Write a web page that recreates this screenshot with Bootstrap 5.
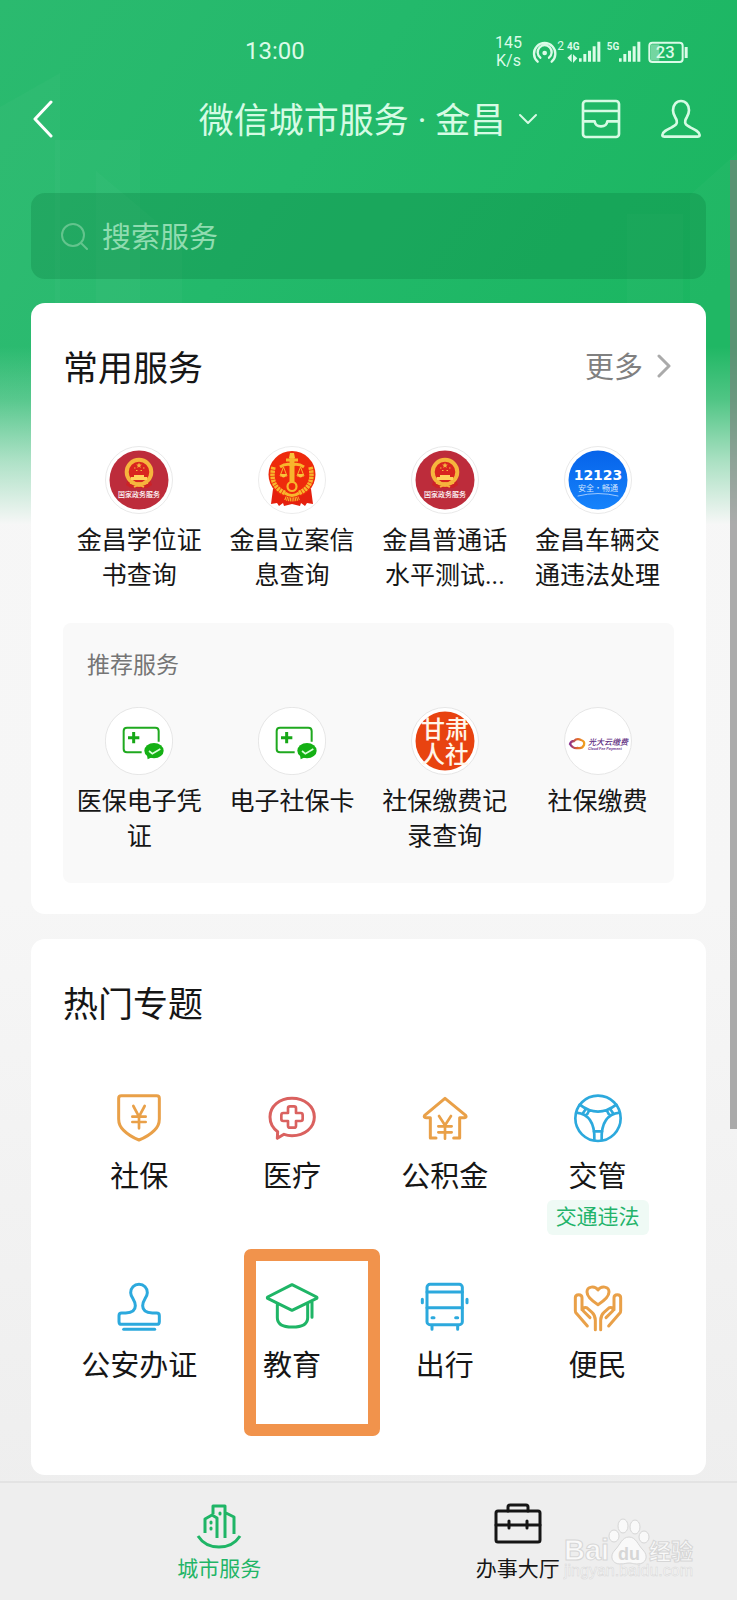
<!DOCTYPE html>
<html lang="zh-CN">
<head>
<meta charset="utf-8">
<meta name="viewport" content="width=device-width, initial-scale=1">
<title>微信城市服务</title>
<link href="https://cdn.jsdelivr.net/npm/bootstrap@5.3.0/dist/css/bootstrap.min.css" rel="stylesheet">
<style>
  :root { --ink: #161616; }
  body { font-family: Roboto, "Noto Sans CJK SC", sans-serif; background: #eee; color: var(--ink); }
  a { color: inherit; text-decoration: none; }
  .city-page { background: linear-gradient(180deg, #f7f7f7 0, #f6f6f6 900px, #eee 1500px); }
  .city-backdrop { height: 525px; z-index: 0; }
  .city-content { z-index: 1; }
  .gutter { padding-left: 31px; padding-right: 31px; }
  .status-bar { height: 68px; padding-top: 34px; color: #dbfbe8; }
  .status-side { padding-right: 49px; gap: 10px; }
  .clock { font-size: 24px; line-height: 34px; padding-left: 245px; }
  .net-speed { font-size: 16px; line-height: 18px; }
  .city-nav { display: grid; grid-template-columns: 1fr auto 1fr; align-items: center; height: 102px; margin-bottom: 23px; color: #d6fbe4; }
  .city-title { font-size: 35px; line-height: 50px; gap: 13px; }
  .city-title span { padding-top: 4px; }
  .nav-tools { gap: 40px; padding-right: 5px; }
  .plain-btn { background: none; border: 0; padding: 0; color: inherit; line-height: 1; }
  .search-field { height: 86px; background: rgba(6,112,54,.24); border-radius: 14px; padding: 0 30px; gap: 13px; color: #63c48d; margin-bottom: 24px; }
  .search-field input { background: none; border: 0; outline: 0; font-size: 29px; line-height: 44px; color: #fff; margin-top: 3px; }
  .search-field input::placeholder { color: #8fdcb0; opacity: 1; }
  .panel { border-radius: 14px; padding: 32px 32px 31px; background: #fff; margin-bottom: 25px; }
  .panel-head { height: 66px; }
  .panel-head h2 { font-size: 35px; line-height: 50px; font-weight: 400; margin: 0; padding-top: 4px; }
  .more-link { font-size: 29px; line-height: 40px; color: #808080; gap: 14px; padding-right: 3px; }
  .more-link svg { color: #aaa; margin-bottom: 4px; }
  .service-name { font-size: 25px; line-height: 35px; margin-top: 9px; padding: 0 12px; min-height: 70px; }
  .service-grid { margin-top: 45px; }
  .suggest { background: #f9f9f9; border-radius: 8px; margin-top: 30px; padding: 26px 0 29px; }
  .suggest h3 { font-size: 23px; line-height: 34px; font-weight: 400; color: #757575; margin: 0 0 24px; padding-left: 24px; }
  .topic-panel { padding-bottom: 6px; margin-bottom: 6px; }
  .topic-grid { margin-top: 54px; }
  .topic { min-height: 189px; }
  .topic-name { font-size: 29px; line-height: 40px; margin-top: 12px; }
  .topic-tag { font-size: 21px; line-height: 35px; padding: 0 9px; margin-top: 3px; border-radius: 6px; background: #effaf5; color: #22b36a; }
  .focus-frame { left: 28px; top: -31px; width: 136px; height: 187px; border: 12px solid #f1934c; border-radius: 7px; pointer-events: none; }
  .tab-strip { border-top: 2px solid #e3e3e3; padding: 19px 70px 17px; background: #eee; }
  .tab-name { font-size: 21px; line-height: 30px; margin-top: 4px; }
  .scroll-thumb { right: 0; top: 160px; width: 7px; height: 969px; background: rgba(125,125,125,.62); z-index: 2; }
  .site-mark { right: 38px; bottom: 10px; width: 136px; height: 80px; z-index: 2; pointer-events: none; }
  .ln { fill: none; stroke: currentColor; stroke-linecap: round; stroke-linejoin: round; }
  .c-amber { color: #e9a048; } .c-red { color: #da615f; } .c-blue { color: #2ca9dd; } .c-green { color: #1fb566; } .c-sky { color: #9cc9ff; }
  .cjk { font-family: "Noto Sans CJK SC", sans-serif; }
</style>
<script src="https://cdn.jsdelivr.net/npm/bootstrap@5.3.0/dist/js/bootstrap.bundle.min.js"></script>
</head>
<body>
<svg class="d-none">
  <symbol id="gov" viewBox="0 0 68 68">
    <circle cx="34" cy="34" r="33.5" fill="#fff" stroke="#e9e9e9"/>
    <circle cx="34" cy="34" r="29.5" fill="#bd2c3b"/>
    <path d="M23 33h22l2 6-5 3H26l-5-3z" fill="#cc2227"/>
    <circle cx="34" cy="26" r="12.3" fill="#d9251f" stroke="#f6b53d" stroke-width="4"/>
    <path d="M34 16.5l.8 2 2 .1-1.600 1.300.6 2-1.800-1.100-1.800 1.100.6-2-1.600-1.300 2-.1z" fill="#f4b83f"/>
    <path d="M29 22h1.500M38 22h1.500M31 24.500h1.500M35.500 24.500h1.500" stroke="#f4b83f" stroke-width="1.200"/>
    <path d="M26 31h3v-2h10v2h3v3H26z" fill="#ffd15b"/>
    <path d="M25 37q9 3 18 0M29 41q5-3 10 0" fill="none" stroke="#f6b53d" stroke-width="1.800"/>
    <circle cx="34" cy="38.500" r="2.200" fill="#f6b53d"/>
    <text x="34" y="50.500" text-anchor="middle" font-size="7" font-weight="500" fill="#fff" class="cjk">国家政务服务</text>
  </symbol>
  <symbol id="health" viewBox="136 50 204 204">
    <circle cx="238" cy="152" r="101" fill="#fff" stroke="#e6e6e6" stroke-width="3"/>
    <path d="M297 154v-32q0-10-10-10h-85q-10 0-10 10v54q0 10 10 10h44" fill="none" stroke="#1fa91f" stroke-width="6"/>
    <path d="M222 125v34M205 142h34" stroke="#17a717" stroke-width="9"/>
    <ellipse cx="283" cy="181" rx="29" ry="23" fill="#14b014"/>
    <path d="M262 194l2 13 16-8z" fill="#14b014"/>
    <path d="M268 182l10 8 24-14" fill="none" stroke="#d8ffd8" stroke-width="5"/>
  </symbol>
</svg>

<div class="city-page position-relative min-vh-100">
  <svg class="city-backdrop position-absolute top-0 start-0 w-100" viewBox="0 0 737 525" preserveAspectRatio="none" aria-hidden="true">
    <defs>
      <linearGradient id="bg" x1="0" y1="0" x2="1" y2="0.500"><stop offset="0" stop-color="#2bba6f"/><stop offset=".45" stop-color="#23b96b"/><stop offset="1" stop-color="#1bb661"/></linearGradient>
      <linearGradient id="fade" x1="0" y1="0" x2="0" y2="1"><stop offset=".66" stop-color="#f7f7f7" stop-opacity="0"/><stop offset=".76" stop-color="#f7f7f7" stop-opacity=".22"/><stop offset=".88" stop-color="#f7f7f7" stop-opacity=".65"/><stop offset="1" stop-color="#f7f7f7"/></linearGradient>
    </defs>
    <path d="M0 0h737v525H0z" fill="url(#bg)"/>
    <g fill="#fff" fill-opacity=".025"><path d="M0 107L60 73V525H0z"/><path d="M55 140h85v385H55z"/><path d="M96 171l86 72v282H96z"/><path d="M690 195l47-42v372h-47z"/><path d="M627 214h56v311h-56z"/></g>
    <path d="M0 0h737v525H0z" fill="url(#fade)"/>
  </svg>

  <div class="city-content position-relative">
    <div class="status-bar d-flex justify-content-between align-items-start">
      <div class="clock">13:00</div>
      <div class="status-side d-flex align-items-center">
        <div class="net-speed text-center">145<br>K/s</div>
        <svg width="156" height="30" viewBox="154 46 468 90" aria-label="信号与电量 23">
          <g class="ln" stroke-width="7"><path d="M171 120a32 32 0 1 1 42 0M179 108a21 21 0 1 1 26 0"/></g>
          <circle cx="192" cy="94" r="7" fill="currentColor"/>
          <g fill="currentColor">
            <text x="230" y="84" font-size="36">2</text>
            <text x="259" y="86" font-size="30" font-weight="700">4G</text>
            <text x="378" y="86" font-size="30" font-weight="700">5G</text>
            <path d="M260 108l13-12v26zM290 110l-13-12v26zM295 110h8v10h-8zM308 97h9v23h-9zM322 87h9v33h-9zM336 74h9v46h-9zM350 60h9v60h-9z"/>
            <path d="M415 110h8v10h-8zM428 97h9v23h-9zM442 87h9v33h-9zM456 74h9v46h-9zM470 60h9v60h-9z"/>
            <path d="M511 68h25v49h-25z" fill-opacity=".45"/><path d="M612 76h9v33h-9z"/>
            <text x="554" y="110" text-anchor="middle" font-size="50" font-weight="500">23</text>
          </g>
          <rect x="506" y="63" width="100" height="58" rx="9" class="ln" stroke-width="6"/>
        </svg>
      </div>
    </div>

    <div class="gutter">
      <header class="city-nav">
        <button class="plain-btn text-start" aria-label="返回"><svg class="text-white" width="22" height="38" viewBox="0 0 22 38"><path d="M20 2L4 19l16 17" class="ln" stroke-width="3"/></svg></button>
        <button class="plain-btn city-title d-flex align-items-center"><span>微信城市服务 · 金昌</span><svg width="20" height="12" viewBox="0 0 20 12"><path d="M2 2l8 8 8-8" class="ln" stroke-width="2"/></svg></button>
        <div class="nav-tools d-flex justify-content-end">
          <button class="plain-btn" aria-label="卡包"><svg width="40" height="40" viewBox="299 237 120 120"><g class="ln" stroke-width="8"><rect x="305" y="243" width="108" height="108" rx="9"/><path d="M306 273h106M306 304h34q2 15 19 15t19-15h34"/></g></svg></button>
          <button class="plain-btn" aria-label="我的"><svg width="40" height="40" viewBox="543 237 120 120"><path d="M603 243c-14 0-24 12-24 28 0 15 9 22 11 30 3 12-4 15-15 21-14 7-28 14-28 23 0 4 3 5 7 5h98c4 0 7-1 7-5 0-9-14-16-28-23-11-6-18-9-15-21 2-8 11-15 11-30 0-16-10-28-24-28z" class="ln" stroke-width="8"/></svg></button>
        </div>
      </header>

      <label class="search-field d-flex align-items-center">
        <svg width="28" height="28" viewBox="0 0 28 28"><g class="ln" stroke-width="2"><circle cx="12" cy="13" r="11"/><path d="M20 21l6 6"/></g></svg>
        <input class="flex-fill p-0" type="search" placeholder="搜索服务" aria-label="搜索服务">
      </label>

      <section class="panel">
        <div class="panel-head d-flex justify-content-between align-items-center">
          <h2>常用服务</h2>
          <a href="#" class="more-link d-flex align-items-center">更多<svg width="14" height="24" viewBox="0 0 14 24"><path d="M2 2l10 10L2 22" class="ln" stroke-width="3"/></svg></a>
        </div>
        <div class="service-grid row row-cols-4 g-0 text-center">
          <a href="#" class="col"><svg width="68" height="68" class="d-block mx-auto"><use href="#gov"/></svg><div class="service-name">金昌学位证书查询</div></a>
          <a href="#" class="col"><svg width="68" height="68" viewBox="0 0 68 68" class="d-block mx-auto">
            <circle cx="34" cy="34" r="33.500" fill="#fff" stroke="#ececec"/>
            <path d="M15 43l-2 15 6-1 2 3 4-3 1 3 8-2 8 2 1-3 4 3 2-3 6 1-2-15z" fill="#e5200e"/>
            <circle cx="34" cy="28.500" r="23.500" fill="#ee2a0c"/>
            <g fill="none" stroke="#f8b62c"><path d="M15.500 21Q11 40 27 47M52.500 21Q57 40 41 47" stroke-width="4.500" stroke-dasharray="2.500 .7"/><path d="M27 47q7 5 14 0" stroke-width="3"/><circle cx="34" cy="40.500" r="4.500" stroke-width="2.200"/><path d="M34 11v25" stroke-width="5"/><path d="M28 14h12M22 21q6-4 12-2 6-2 12 2" stroke-width="3"/><path d="M25.500 21l-3.500 9h7zM42.500 21l-3.500 9h7z" stroke-width="1"/><path d="M27 52q7 3 14 0" stroke-width="4" stroke-dasharray="1 .7"/></g>
            <path d="M22 28h7q-3.500 7-7 0zM39 28h7q-3.500 7-7 0zM32 7h4l1 5h-6z" fill="#f8c43c"/>
          </svg><div class="service-name">金昌立案信息查询</div></a>
          <a href="#" class="col"><svg width="68" height="68" class="d-block mx-auto"><use href="#gov"/></svg><div class="service-name">金昌普通话水平测试...</div></a>
          <a href="#" class="col"><svg width="68" height="68" viewBox="0 0 68 68" class="d-block mx-auto">
            <defs><linearGradient id="blue" x1="0" y1="0" x2="0" y2="1"><stop stop-color="#0663ea"/><stop offset="1" stop-color="#1683fb"/></linearGradient></defs>
            <circle cx="34" cy="34" r="33.500" fill="#fff" stroke="#e9e9e9"/><circle cx="34" cy="34" r="29.500" fill="url(#blue)"/>
            <text x="34" y="34" text-anchor="middle" font-family="DejaVu Sans" font-weight="700" font-size="14" fill="#fff">12123</text>
            <text x="34" y="45" text-anchor="middle" font-size="8" fill="#cfe5ff" class="cjk">安全·畅通</text><path d="M14 50q20-5 40 0" class="ln c-sky" stroke-width="1"/>
          </svg><div class="service-name">金昌车辆交通违法处理</div></a>
        </div>

        <div class="suggest">
          <h3>推荐服务</h3>
          <div class="row row-cols-4 g-0 text-center">
            <a href="#" class="col"><svg width="68" height="68" class="d-block mx-auto"><use href="#health"/></svg><div class="service-name">医保电子凭证</div></a>
            <a href="#" class="col"><svg width="68" height="68" class="d-block mx-auto"><use href="#health"/></svg><div class="service-name">电子社保卡</div></a>
            <a href="#" class="col"><svg width="68" height="68" viewBox="0 0 68 68" class="d-block mx-auto">
              <circle cx="34" cy="34" r="33.500" fill="#fff" stroke="#e6e6e6"/><circle cx="34" cy="34" r="29.500" fill="#e84310"/>
              <g class="cjk" font-size="24" font-weight="500" fill="#fff6ea" text-anchor="middle"><text x="34" y="31">甘肃</text><text x="34" y="56">人社</text></g>
            </svg><div class="service-name">社保缴费记录查询</div></a>
            <a href="#" class="col"><svg width="68" height="68" viewBox="0 0 68 68" class="d-block mx-auto">
              <defs><linearGradient id="ring"><stop stop-color="#8a2f8e"/><stop offset=".5" stop-color="#e0662f"/><stop offset="1" stop-color="#f0a020"/></linearGradient></defs>
              <circle cx="34" cy="34" r="33.500" fill="#fff" stroke="#e6e6e6"/>
              <path d="M6 37q1-3 4-3 3-3 7-1 4 1 3 5-2 4-6 3-5 1-8-4z" fill="none" stroke="url(#ring)" stroke-width="2.300"/>
              <text x="24" y="38" font-size="8" font-style="italic" font-weight="500" fill="#5c2b80" class="cjk">光大云缴费</text><text x="24" y="43" font-size="4" font-style="italic" font-weight="700" fill="#7a4a98">Cloud Fee Payment</text>
            </svg><div class="service-name">社保缴费</div></a>
          </div>
        </div>
      </section>

      <section class="panel topic-panel">
        <div class="panel-head d-flex align-items-center"><h2>热门专题</h2></div>
        <div class="topic-grid row row-cols-4 g-0">
          <a href="#" class="col topic d-flex flex-column align-items-center"><svg class="c-amber" width="54" height="54" viewBox="157 63 162 162"><g class="ln" stroke-width="9"><path d="M185 77h106q8 0 8 8v62q0 20-15 34-18 18-46 29-28-11-46-29-15-14-15-34V85q0-8 8-8z"/><path d="M221 108l17 32 17-32M238 140v35M218 140h40M218 156h40" stroke-width="8"/></g></svg><div class="topic-name">社保</div></a>
          <a href="#" class="col topic d-flex flex-column align-items-center"><svg class="c-red" width="54" height="54" viewBox="616 63 162 162"><g class="ln" stroke-width="9"><path d="M697 85c38 0 67 24 67 56s-29 56-67 56q-13 0-24-4l-20 12 1-20c-15-11-23-26-23-44 0-32 28-56 66-56z"/><path d="M691 109h12q6 0 6 6v14h14q6 0 6 6v12q0 6-6 6h-14v14q0 6-6 6h-12q-6 0-6-6v-14h-14q-6 0-6-6v-12q0-6 6-6h14v-14q0-6 6-6z" stroke-width="8"/></g></svg><div class="topic-name">医疗</div></a>
          <a href="#" class="col topic d-flex flex-column align-items-center"><svg class="c-amber" width="54" height="54" viewBox="145 63 162 162"><g class="ln" stroke-width="9"><path d="M199 204h-17v-61h-13q-8 0-4-7l61-51 62 51q4 7-4 7h-14v61h-18"/><path d="M208 138l18 28 18-28M226 166v40M206 169h40M206 187h40" stroke-width="8"/></g></svg><div class="topic-name">公积金</div></a>
          <a href="#" class="col topic d-flex flex-column align-items-center"><svg class="c-blue" width="54" height="54" viewBox="604 63 162 162"><g class="ln" stroke-width="8"><circle cx="685" cy="145" r="68"/><path d="M630 104q55 42 110 0M620 128q57 6 54 82M750 128q-57 6-54 82M658 122q-5 12-10 15M712 122q5 12 10 15M648 118l-10 14M722 118l10 14M672 184h26"/></g></svg><div class="topic-name">交管</div><span class="topic-tag">交通违法</span></a>
          <a href="#" class="col topic d-flex flex-column align-items-center"><svg class="c-blue" width="54" height="54" viewBox="157 120 162 162"><g class="ln" stroke-width="9"><path d="M238 133c-15 0-25 11-25 25 0 13 14 22 14 39 0 14-12 21-29 22h-12q-8 0-8 8v18q0 8 8 8h105q8 0 8-8v-18q0-8-8-8h-13c-17-1-29-8-29-22 0-17 14-26 14-39 0-14-10-25-25-25z"/><path d="M192 268h93"/></g></svg><div class="topic-name">公安办证</div></a>
          <a href="#" class="col topic d-flex flex-column align-items-center position-relative"><svg class="c-green" width="54" height="54" viewBox="616 120 162 162"><g class="ln" stroke-width="9"><path d="M697 134l74 37q2 2 0 4l-74 36-73-36q-2-2 0-4zM653 191v42q0 28 45 28 46 0 46-28v-42M757 186v46"/></g></svg><div class="topic-name">教育</div><span class="focus-frame position-absolute"></span></a>
          <a href="#" class="col topic d-flex flex-column align-items-center"><svg class="c-blue" width="54" height="54" viewBox="145 60 162 162"><g class="ln" stroke-width="9"><rect x="172" y="73" width="106" height="121" rx="9"/><path d="M172 96h106M172 143h106M187 198v10M264 198v10M158 118v10M292 118v10M187 173h6M258 173h6"/></g></svg><div class="topic-name">出行</div></a>
          <a href="#" class="col topic d-flex flex-column align-items-center"><svg class="c-amber" width="54" height="54" viewBox="604 60 162 162"><g class="ln" stroke-width="9"><path d="M685 134q-33-21-33-38c0-17 23-20 33-6 10-14 33-11 33 6q0 17-33 38z"/><path id="palm" d="M653 198l-33-38q-3-3-3-8v-39q0-9 10-9t10 9v36M661 173l-20-20q-4-12 10-10l16 14q10 9 10 24v28"/><use href="#palm" transform="matrix(-1 0 0 1 1370 0)"/></g></svg><div class="topic-name">便民</div></a>
        </div>
      </section>
    </div>

    <nav class="tab-strip d-flex">
      <a href="#" class="flex-fill w-50 text-center c-green"><svg width="48" height="48" viewBox="0 0 48 48" class="d-block mx-auto"><g class="ln" stroke-width="3"><path d="M10 31V17l7-4 5 3v20M18 12V4h12v32M31 11l8 4v17M3 34q7 11 21 11t21-11" stroke-linecap="butt"/><path d="M16 20v1M16 26v1M25 11v1"/></g></svg><div class="tab-name">城市服务</div></a>
      <a href="#" class="flex-fill w-50 text-center"><svg width="48" height="48" viewBox="0 0 48 48" class="d-block mx-auto"><g class="ln" stroke-width="3"><rect x="2" y="9" width="44" height="31" rx="2"/><path d="M14 9V5q0-2 2-2h16q2 0 2 2v4M2 23h44M15 19v7M33 19v7"/></g></svg><div class="tab-name">办事大厅</div></a>
    </nav>
  </div>

  <svg class="site-mark position-absolute" viewBox="0 0 136 80" aria-hidden="true">
    <g fill="#f9f9f9" stroke="#d6d6d6" stroke-width="1">
      <text x="1" y="49" font-family="Liberation Sans" font-weight="700" font-size="29">Bai</text>
      <ellipse cx="60" cy="15" rx="5" ry="7"/><ellipse cx="72" cy="16" rx="5" ry="7"/><ellipse cx="51" cy="25" rx="5" ry="6"/><ellipse cx="81" cy="26" rx="5" ry="6"/>
      <path d="M66 26c7 0 9 8 14 13 6 6 3 14-5 14-5 0-6-1-9-1s-4 1-9 1c-8 0-11-8-5-14 5-5 7-13 14-13z"/>
      <text x="86" y="48" font-size="22" font-weight="700" class="cjk">经验</text>
      <text x="1" y="65" font-family="Liberation Sans" font-size="16" stroke-width=".5">jingyan.baidu.com</text>
    </g>
    <text x="66" y="49" text-anchor="middle" font-family="Liberation Sans" font-weight="700" font-size="18" fill="#d6d6d6">du</text>
  </svg>
  <div class="scroll-thumb position-absolute"></div>
</div>
</body>
</html>
